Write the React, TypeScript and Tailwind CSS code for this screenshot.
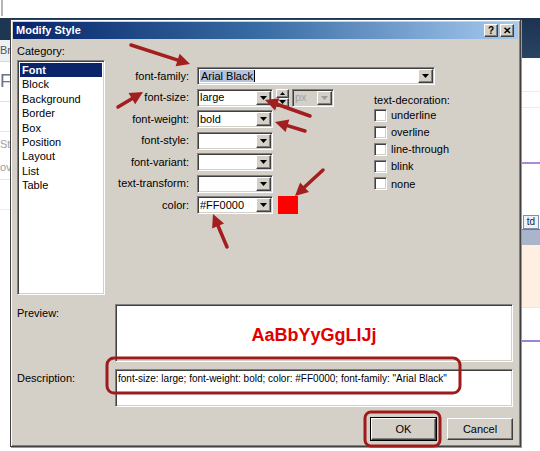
import React from "react";

const sunken =
  "border border-t-[#808080] border-l-[#808080] border-r-white border-b-white shadow-[inset_1px_1px_0_#404040,inset_-1px_-1px_0_#d4d0c8]";
const raised =
  "border border-t-white border-l-white border-r-[#404040] border-b-[#404040] shadow-[inset_-1px_-1px_0_#808080]";

function Tri({ color = "#000" }: { color?: string }) {
  return (
    <svg width="7" height="4" viewBox="0 0 7 4">
      <polygon points="0,0 7,0 3.5,4" fill={color} />
    </svg>
  );
}

function DropBtn({ grey }: { grey?: boolean }) {
  return (
    <div className={`ml-auto mr-[1px] flex h-[14px] w-[15px] shrink-0 items-center justify-center bg-[#d4d0c8] ${raised}`}>
      <Tri color={grey ? "#9a9a9a" : "#000"} />
    </div>
  );
}

function Select({ w, value, grey }: { w: string; value?: React.ReactNode; grey?: boolean }) {
  return (
    <div className={`flex h-[18px] items-center ${grey ? "bg-[#d4d0c8]" : "bg-white"} ${sunken} ${w}`}>
      <span className={`pl-[2px] leading-none ${grey ? "text-[#a0a0a0]" : "text-black"}`}>{value}</span>
      <DropBtn grey={grey} />
    </div>
  );
}

function Check({ label }: { label: string }) {
  return (
    <div className="flex h-[17.2px] items-center gap-[4px]">
      <div className={`h-[13px] w-[13px] bg-white ${sunken}`} />
      <span>{label}</span>
    </div>
  );
}

function Arrow({ x1, y1, x2, y2 }: { x1: number; y1: number; x2: number; y2: number }) {
  const a = Math.atan2(y2 - y1, x2 - x1);
  const L = 13;
  const W = 6.5;
  const bx = x2 - L * Math.cos(a);
  const by = y2 - L * Math.sin(a);
  const p1 = `${bx + W * Math.sin(a)},${by - W * Math.cos(a)}`;
  const p2 = `${bx - W * Math.sin(a)},${by + W * Math.cos(a)}`;
  return (
    <g>
      <line x1={x1} y1={y1} x2={bx + 1 * Math.cos(a)} y2={by + 1 * Math.sin(a)} stroke="#a31e1e" strokeWidth="3.5" strokeLinecap="round" />
      <polygon points={`${x2},${y2} ${p1} ${p2}`} fill="#a31e1e" />
    </g>
  );
}

const categories = ["Font", "Block", "Background", "Border", "Box", "Position", "Layout", "List", "Table"];

export default function App() {
  return (
    <div className="relative h-[451px] w-[540px] overflow-hidden bg-white font-['Liberation_Sans',Arial,sans-serif] text-[11px] text-black">
      {/* page behind the dialog */}
      <div className="flex h-full">
        <div className="flex w-[10px] flex-col">
          <div className="ml-[1px] h-[16px] w-[2px] bg-[#b5b5b5]" />
          <div className="h-[2px]" />
          <div className="h-[22px] bg-[#1f3653]" />
          <div className="flex h-[22px] items-center overflow-hidden border-b border-[#d8d8d8] bg-[#eef1f3] text-[#555]">Br</div>
          <div className="flex h-[40px] items-center overflow-hidden border-b border-[#e2e2e2] text-[18px] text-[#6a7580]">F</div>
          <div className="h-[30px] border-b border-[#e6e6e6]" />
          <div className="flex h-[24px] items-center overflow-hidden text-[#9aa0a6]">St</div>
          <div className="flex h-[24px] items-center overflow-hidden border-b border-[#e6e6e6] text-[#9aa0a6]">ov</div>
          <div className="h-[30px] border-b border-[#ededed]" />
          <div className="flex-1" />
        </div>
        <div className="flex flex-1 flex-col">
          <div className="h-[18px]" />
          <div className="h-[40px] bg-[#1f3653]" />
        </div>
        <div className="flex w-[19px] flex-col">
          <div className="h-[18px]" />
          <div className="h-[40px] bg-linear-to-b from-[#1c3350] to-[#2a4464]" />
          <div className="h-[34px] border-b border-[#ececec]" />
          <div className="h-[16px] border-b border-[#ececec]" />
          <div className="h-[54px]" />
          <div className="h-[2px] bg-[#a98bd8]" />
          <div className="h-[50px]" />
          <div className="flex h-[15px] items-center">
            <div className="ml-[2px] flex h-[14px] w-[16px] items-center justify-center border border-[#8090a8] bg-[#eef2f8] text-[10px] text-[#223]">td</div>
          </div>
          <div className="h-[16px] border-t border-[#6a7890] bg-[#aab5cc]" />
          <div className="h-[62px] bg-[#fdf0e2]" />
          <div className="h-[33px] border-t border-[#e8e8e8]" />
          <div className="h-[2px] bg-[#9a86d0]" />
          <div className="flex-1" />
        </div>
      </div>

      {/* dialog */}
      <div className="absolute left-[10px] top-[19px] flex h-[428px] w-[511px] flex-col border border-[#404040] bg-[#d4d0c8] p-[2px] shadow-[inset_1px_1px_0_#ffffff,inset_-1px_-1px_0_#808080,1px_1px_0_#9a9a9a]">
        <div className="flex h-[17px] items-center bg-linear-to-r from-[#0a246a] via-[#3a6ea5] to-[#a6caf0] pl-[3px] pr-[4px]">
          <span className="text-[11px] font-bold text-white">Modify Style</span>
          <div className="ml-auto flex gap-[2px]">
            <div className={`flex h-[13px] w-[14px] items-center justify-center bg-[#d4d0c8] text-[10px] font-bold leading-none ${raised}`}>?</div>
            <div className={`flex h-[13px] w-[14px] items-center justify-center bg-[#d4d0c8] text-[10px] font-bold leading-none ${raised}`}>✕</div>
          </div>
        </div>

        <div className="flex flex-col pl-[4px] pr-[5px] pt-[6px]">
          <div className="flex">
            <div className="flex w-[88px] flex-col">
              <div className="h-[15px] leading-[13px]">Category:</div>
              <div className={`h-[235px] bg-white p-[2px] ${sunken}`}>
                {categories.map((c, i) => (
                  <div
                    key={c}
                    className={`flex h-[14.4px] items-center pl-[2px] ${i === 0 ? "bg-[#0a246a] font-bold text-white" : ""}`}
                  >
                    {c}
                  </div>
                ))}
              </div>
            </div>

            <div className="flex flex-col pt-[22px]">
              <div className="flex h-[18px] items-center">
                <div className="w-[85px] pr-[1px] text-right">font-family:</div>
                <div className={`ml-[7px] flex h-[18px] w-[238px] items-center bg-white ${sunken}`}>
                  <span className="ml-[2px] bg-[#b4c2dc] px-[1px] leading-[12px]">Arial Black</span>
                  <span className="h-[12px] w-[1px] bg-black" />
                  <DropBtn />
                </div>
              </div>

              <div className="mt-[3.5px] flex">
                <div className="flex flex-col gap-[3.5px]">
                  <div className="flex h-[18px] items-center">
                    <div className="w-[85px] pr-[1px] text-right">font-size:</div>
                    <div className="ml-[7px] flex items-center gap-[3px]">
                      <Select w="w-[76px]" value="large" />
                      <div className="flex h-[18px] w-[13px] flex-col">
                        <div className={`flex h-[9px] items-center justify-center bg-[#d4d0c8] ${raised}`}>
                          <svg width="5" height="3" viewBox="0 0 5 3"><polygon points="2.5,0 5,3 0,3" fill="#000" /></svg>
                        </div>
                        <div className={`flex h-[9px] items-center justify-center bg-[#d4d0c8] ${raised}`}>
                          <Tri />
                        </div>
                      </div>
                      <Select w="w-[42px]" value="px" grey />
                    </div>
                  </div>
                  {[
                    ["font-weight:", "bold"],
                    ["font-style:", ""],
                    ["font-variant:", ""],
                    ["text-transform:", ""],
                  ].map(([l, v]) => (
                    <div key={l} className="flex h-[18px] items-center">
                      <div className="w-[85px] pr-[1px] text-right">{l}</div>
                      <div className="ml-[7px]">
                        <Select w="w-[76px]" value={v} />
                      </div>
                    </div>
                  ))}
                  <div className="flex h-[18px] items-center">
                    <div className="w-[85px] pr-[1px] text-right">color:</div>
                    <div className="ml-[7px] flex items-center gap-[5px]">
                      <Select w="w-[76px]" value="#FF0000" />
                      <div className="h-[18px] w-[20px] bg-[#ff0000]" />
                    </div>
                  </div>
                </div>

                <div className="ml-[40px] flex flex-col pt-[5px]">
                  <div className="h-[13px] leading-[13px]">text-decoration:</div>
                  <Check label="underline" />
                  <Check label="overline" />
                  <Check label="line-through" />
                  <Check label="blink" />
                  <Check label="none" />
                </div>
              </div>
            </div>
          </div>

          <div className="mt-[9px] flex">
            <div className="w-[98px] pt-[1px]">Preview:</div>
            <div className={`flex h-[58px] flex-1 items-center justify-center bg-white ${sunken}`}>
              <span className="pt-[4px] text-[18px] font-bold text-[#e00000]">AaBbYyGgLlJj</span>
            </div>
          </div>

          <div className="mt-[7px] flex">
            <div className="w-[98px] pt-[1px]">Description:</div>
            <div className={`h-[38px] flex-1 bg-white px-[2px] pt-[1px] text-[10px] ${sunken}`}>
              font-size: large; font-weight: bold; color: #FF0000; font-family: "Arial Black"
            </div>
          </div>

          <div className="mt-[11px] flex justify-end gap-[11px]">
            <div className={`flex h-[22px] w-[65px] items-center justify-center bg-[#d4d0c8] outline outline-1 outline-[#000] ${raised}`}>OK</div>
            <div className={`flex h-[22px] w-[66px] items-center justify-center bg-[#d4d0c8] ${raised}`}>Cancel</div>
          </div>
        </div>
      </div>

      {/* annotations */}
      <svg className="pointer-events-none absolute left-0 top-0" width="540" height="451" viewBox="0 0 540 451">
        <Arrow x1={131} y1={45} x2={190} y2={64} />
        <Arrow x1={118} y1={107} x2={143} y2={92} />
        <Arrow x1={310} y1={116} x2={265} y2={100} />
        <Arrow x1={305} y1={131} x2={275} y2={122} />
        <Arrow x1={323} y1={170} x2={295} y2={196} />
        <Arrow x1={227} y1={247} x2={213} y2={214} />
        <rect x="107" y="358" width="353" height="35" rx="7" fill="none" stroke="#9e1b1b" strokeWidth="3" />
        <rect x="365" y="412" width="75" height="34" rx="6" fill="none" stroke="#9e1b1b" strokeWidth="3" />
      </svg>
    </div>
  );
}
